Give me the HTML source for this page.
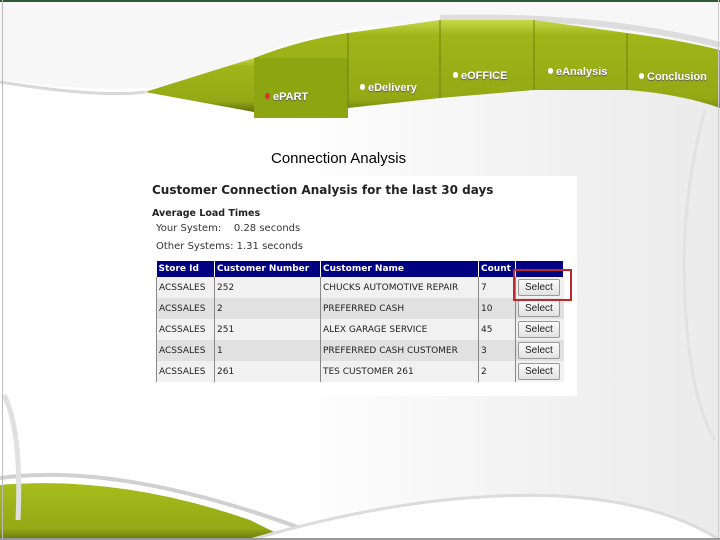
<!DOCTYPE html>
<html><head><meta charset="utf-8"><style>
body{margin:0;width:720px;height:540px;overflow:hidden;position:relative;background:#fff;font-family:"Liberation Sans",sans-serif}
svg{position:absolute;left:0;top:0}
.t{position:absolute;color:#fff;font-weight:bold;font-size:11px;text-shadow:0 1px 1px #556}
.dot{display:inline-block;width:5px;height:6px;border-radius:3px;background:#fff;margin-right:3px;vertical-align:1px}
#box{position:absolute;left:148px;top:176px;width:429px;height:220px;background:#fff;font-family:"DejaVu Sans",sans-serif}
table{position:absolute;left:8px;top:85px;border-collapse:collapse;font-size:9px;color:#222;table-layout:fixed;width:407px}
th{background:#000080;color:#fff;text-align:left;height:16px;padding:0 2px;border-right:1px solid #fff;font-size:9px;white-space:nowrap;overflow:hidden}
td{height:21px;padding:0 2px;border-left:1px solid #888;white-space:nowrap;overflow:hidden}
tr.a td{background:#f1f1f1}tr.b td{background:#e1e1e1}
.btn{display:inline-block;border:1px solid #999;background:linear-gradient(#fafafa,#e2e2e2);font-family:"Liberation Sans",sans-serif;font-size:10px;padding:2px 6px;border-radius:2px}
</style></head><body>
<svg width="720" height="540">
<defs>
<linearGradient id="g" x1="0" y1="0" x2="0" y2="1"><stop offset="0" stop-color="#c4d84a"/><stop offset=".15" stop-color="#9fb619"/><stop offset=".8" stop-color="#93a915"/><stop offset="1" stop-color="#5f6f0c"/></linearGradient>
<linearGradient id="r" x1="0" y1="0" x2="1" y2="0"><stop offset="0" stop-color="#fff"/><stop offset=".4" stop-color="#fff"/><stop offset=".8" stop-color="#f0f0f0"/><stop offset="1" stop-color="#ebebeb"/></linearGradient>
<linearGradient id="b" x1="0" y1="0" x2="0" y2="1"><stop offset="0" stop-color="#a6bd1c"/><stop offset=".8" stop-color="#93a915"/><stop offset="1" stop-color="#66750e"/></linearGradient>
</defs>
<rect width="720" height="540" fill="url(#r)"/>
<path d="M0 0H720V60Q600 15 440 20Q300 25 220 75Q150 100 0 80Z" fill="#f7f7f7"/>
<path d="M0 82Q100 98 145 92" fill="none" stroke="#d8d8d8" stroke-width="3"/>
<path d="M440 18Q600 14 720 45" fill="none" stroke="#ddd" stroke-width="6"/>
<path d="M145 92L254 58V112Z" fill="url(#g)"/>
<path d="M254 58Q300 40 348 33L440 20L534 20L627 33Q680 40 720 50V108Q680 94 627 90L534 90L440 98L348 108L348 118H254Z" fill="url(#g)"/>
<rect x="254" y="58" width="94" height="60" fill="#8ea512"/>
<path d="M348 33V108M440 20V98M534 20V90M627 33V90" stroke="#6f8210" stroke-width="1"/>
<path d="M705 110Q680 200 685 300Q690 400 715 440" fill="none" stroke="#e2e2e2" stroke-width="3"/>
<path d="M0 485Q120 475 250 520L290 540H0Z" fill="url(#b)"/>
<path d="M0 478Q120 462 300 528" fill="none" stroke="#d0d0d0" stroke-width="4"/>
<path d="M250 540Q420 490 560 496Q660 502 720 540" fill="#fff" stroke="#dcdcdc" stroke-width="3"/>
<path d="M4 395Q22 430 18 520" fill="none" stroke="#e0e0e0" stroke-width="5"/>
<rect x="0" y="0" width="720" height="2" fill="#2f5a36"/>
<rect x="2" y="0" width="1" height="540" fill="#bbb"/>
<rect x="718" y="0" width="1" height="540" fill="#ccc"/>
<rect x="0" y="538" width="720" height="2" fill="#999"/>
</svg>
<div class="t" style="left:265px;top:91px"><span class="dot" style="background:#d33"></span>ePART</div>
<div class="t" style="left:360px;top:82px"><span class="dot"></span>eDelivery</div>
<div class="t" style="left:453px;top:70px"><span class="dot"></span>eOFFICE</div>
<div class="t" style="left:548px;top:66px"><span class="dot"></span>eAnalysis</div>
<div class="t" style="left:639px;top:71px"><span class="dot"></span>Conclusion</div>
<div style="position:absolute;left:271px;top:150px;font-size:15px;color:#000">Connection Analysis</div>
<div id="box">
<div style="position:absolute;left:4px;top:7px;font-weight:bold;font-size:12px;color:#222">Customer Connection Analysis for the last 30 days</div>
<div style="position:absolute;left:4px;top:32px;font-weight:bold;font-size:9.5px;color:#222">Average Load Times</div>
<div style="position:absolute;left:8px;top:47px;font-size:10px;color:#333">Your System: &nbsp;&nbsp;&nbsp;0.28 seconds</div>
<div style="position:absolute;left:8px;top:65px;font-size:10px;color:#333">Other Systems: 1.31 seconds</div>
<table>
<colgroup><col style="width:58px"><col style="width:106px"><col style="width:158px"><col style="width:37px"><col style="width:48px"></colgroup>
<tr><th>Store Id</th><th>Customer Number</th><th>Customer Name</th><th>Count</th><th></th></tr>
<tr class="a"><td>ACSSALES</td><td>252</td><td>CHUCKS AUTOMOTIVE REPAIR</td><td>7</td><td><span class="btn">Select</span></td></tr>
<tr class="b"><td>ACSSALES</td><td>2</td><td>PREFERRED CASH</td><td>10</td><td><span class="btn">Select</span></td></tr>
<tr class="a"><td>ACSSALES</td><td>251</td><td>ALEX GARAGE SERVICE</td><td>45</td><td><span class="btn">Select</span></td></tr>
<tr class="b"><td>ACSSALES</td><td>1</td><td>PREFERRED CASH CUSTOMER</td><td>3</td><td><span class="btn">Select</span></td></tr>
<tr class="a"><td>ACSSALES</td><td>261</td><td>TES CUSTOMER 261</td><td>2</td><td><span class="btn">Select</span></td></tr>
</table>
</div>
<div style="position:absolute;left:513px;top:269px;width:55px;height:28px;border:2px solid #c0272d"></div>
</body></html>
